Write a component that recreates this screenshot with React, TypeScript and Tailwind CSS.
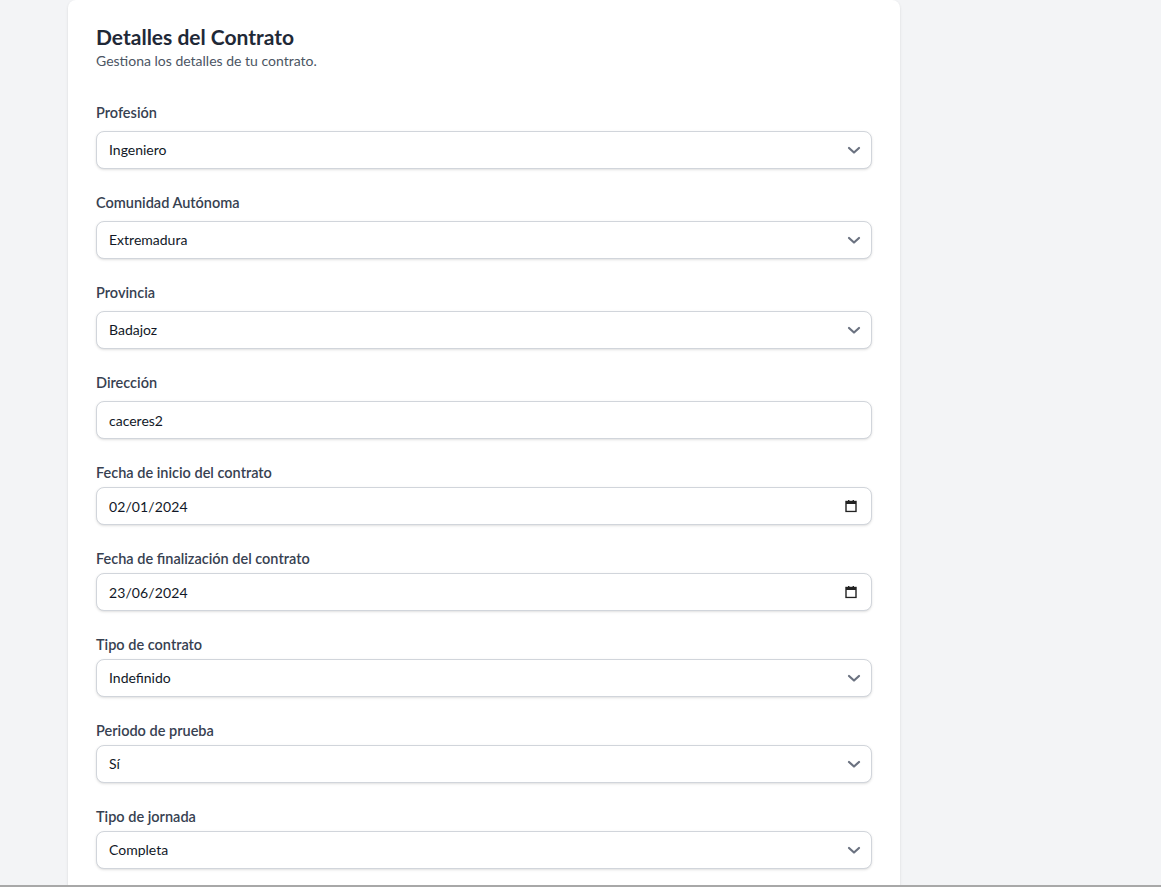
import React from "react";

const Chevron = () => (
  <svg className="pointer-events-none absolute right-[11px] top-1/2 -translate-y-1/2" width="14" height="14" viewBox="0 0 14 14" fill="none">
    <path d="M2 5l5 4.5L12 5" stroke="#6b7280" strokeWidth="2.2" strokeLinecap="round" strokeLinejoin="round" />
  </svg>
);

const Field = ({ label, children, gap = "mt-2" }: { label: string; children: React.ReactNode; gap?: string }) => (
  <div>
    <label className="block text-[14.5px] leading-5 font-semibold text-[#374151]">{label}</label>
    <div className={gap}>{children}</div>
  </div>
);

const Select = ({ value, options }: { value: string; options: string[] }) => (
  <div className="relative">
    <select
      defaultValue={value}
      className="block h-[38px] w-full appearance-none rounded-lg border border-[#d1d5db] bg-white pl-3 pr-10 text-[14px] leading-5 text-[#111827] shadow-sm outline-none"
    >
      {options.map((o) => (
        <option key={o}>{o}</option>
      ))}
    </select>
    <Chevron />
  </div>
);

const DateInput = ({ value }: { value: string }) => (
  <div className="relative">
    <input
      type="text"
      readOnly
      value={value}
      className="block h-[38px] w-full rounded-lg border border-[#d1d5db] bg-white pl-3 pr-10 text-[14px] tracking-[0.1px] text-[#111827] shadow-sm outline-none"
    />
    <svg className="pointer-events-none absolute right-[15px] top-1/2 -translate-y-1/2" width="12" height="13" viewBox="0 0 12 13">
      <rect x="1" y="2" width="10" height="10" fill="none" stroke="#222" strokeWidth="1.4" />
      <rect x="1" y="2" width="10" height="2.5" fill="#222" />
      <rect x="3" y="0.5" width="1.4" height="2" fill="#222" />
      <rect x="7.6" y="0.5" width="1.4" height="2" fill="#222" />
    </svg>
  </div>
);

export default function App() {
  return (
    <div
      className="flex h-[887px] flex-col overflow-hidden bg-[#f3f4f6]"
      style={{ fontFamily: 'Lato, "Noto Sans", sans-serif' }}
    >
      <div className="flex-1 overflow-hidden">
        <div className="ml-[68px] w-[832px] rounded-lg bg-white px-7 pt-[25px] pb-10 shadow-sm">
          <h2 className="text-[21px] leading-6 font-bold text-[#1f2937]">Detalles del Contrato</h2>
          <p className="mt-[2px] text-[14px] leading-5 text-[#4b5563]">Gestiona los detalles de tu contrato.</p>
          <div className="mt-8 space-y-6">
            <Field label="Profesión">
              <Select value="Ingeniero" options={["Ingeniero", "Médico", "Abogado"]} />
            </Field>
            <Field label="Comunidad Autónoma">
              <Select value="Extremadura" options={["Andalucía", "Extremadura", "Madrid"]} />
            </Field>
            <Field label="Provincia">
              <Select value="Badajoz" options={["Badajoz", "Cáceres"]} />
            </Field>
            <Field label="Dirección">
              <input
                type="text"
                defaultValue="caceres2"
                className="block h-[38px] w-full rounded-lg border border-[#d1d5db] bg-white px-3 text-[14px] text-[#111827] shadow-sm outline-none"
              />
            </Field>
            <Field label="Fecha de inicio del contrato" gap="mt-1">
              <DateInput value="02/01/2024" />
            </Field>
            <Field label="Fecha de finalización del contrato" gap="mt-1">
              <DateInput value="23/06/2024" />
            </Field>
            <Field label="Tipo de contrato" gap="mt-1">
              <Select value="Indefinido" options={["Indefinido", "Temporal"]} />
            </Field>
            <Field label="Periodo de prueba" gap="mt-1">
              <Select value="Sí" options={["Sí", "No"]} />
            </Field>
            <Field label="Tipo de jornada" gap="mt-1">
              <Select value="Completa" options={["Completa", "Parcial"]} />
            </Field>
          </div>
        </div>
      </div>
      <div className="h-[2px] shrink-0 bg-[#a8a8a8]" />
    </div>
  );
}
